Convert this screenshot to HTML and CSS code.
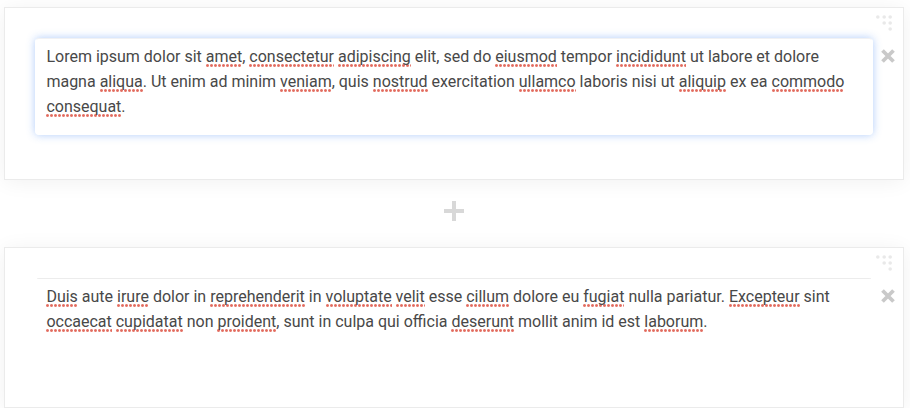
FILE: index.html
```html
<!DOCTYPE html>
<html lang="en">
<head>
<meta charset="utf-8">
<title>Content blocks</title>
<link rel="stylesheet" href="styles.css">
</head>
<body>
<svg class="defs" aria-hidden="true">
  <symbol id="grip" viewBox="0 0 16 16"><circle cx="1.8" cy="2" r="1.8"/><circle cx="8.2" cy="2" r="1.8"/><circle cx="14.2" cy="2" r="1.8"/><circle cx="8.2" cy="8" r="1.8"/><circle cx="14.2" cy="8" r="1.8"/><circle cx="14.2" cy="14" r="1.8"/></symbol>
  <symbol id="close" viewBox="0 0 14 14"><path d="M1.5 1.5l11 11M12.5 1.5l-11 11"/></symbol>
</svg>
<main class="blocks">
  <section class="card card-first">
    <div class="field focused">Lorem ipsum dolor sit <span class="sp">amet</span>, <span class="sp">consectetur</span> <span class="sp">adipiscing</span> elit, sed do <span class="sp">eiusmod</span> tempor <span class="sp">incididunt</span> ut labore et dolore<br>magna <span class="sp">aliqua</span>. Ut enim ad minim <span class="sp">veniam</span>, quis <span class="sp">nostrud</span> exercitation <span class="sp">ullamco</span> laboris nisi ut <span class="sp">aliquip</span> ex ea <span class="sp">commodo</span><br><span class="sp">consequat</span>.</div>
    <div class="tools"><svg class="grip"><use href="#grip"/></svg><svg class="close"><use href="#close"/></svg></div>
  </section>
  <div class="add"><svg class="plus" viewBox="0 0 20 20"><path d="M8 0h4v8h8v4h-8v8H8v-8H0V8h8z"/></svg></div>
  <section class="card card-second">
    <div class="field"><span class="sp">Duis</span> aute <span class="sp">irure</span> dolor in <span class="sp">reprehenderit</span> in <span class="sp">voluptate</span> <span class="sp">velit</span> esse <span class="sp">cillum</span> dolore eu <span class="sp">fugiat</span> nulla pariatur. <span class="sp">Excepteur</span> sint<br><span class="sp">occaecat</span> <span class="sp">cupidatat</span> non <span class="sp">proident</span>, sunt in culpa qui officia <span class="sp">deserunt</span> mollit anim id est <span class="sp">laborum</span>.</div>
    <div class="tools"><svg class="grip"><use href="#grip"/></svg><svg class="close"><use href="#close"/></svg></div>
  </section>
</main>
</body>
</html>
```
FILE: styles.css
```css
* { box-sizing: border-box; }
body {
  margin: 0;
  background: #fff;
  color: #484848;
  font: 16px/25px Roboto, sans-serif;
  overflow: hidden;
}
.defs { display: none; }
.blocks { padding: 7px 6px 0 4px; }
.card {
  display: flex;
  align-items: flex-start;
  padding: 0 0 0 30px;
  background: #fff;
  border: 1px solid #ebebeb;
  box-shadow: 0 2px 20px rgba(0, 0, 0, .06);
}
.card-first { height: 173px; }
.card-second { height: 161px; }
.field {
  width: 838px;
  height: 97px;
  margin-top: 30px;
  padding: 5px 10.4px;
  border: 1px solid transparent;
  border-radius: 4px;
  white-space: nowrap;
  background: linear-gradient(#ececec, #ececec) 2px 0 / 834px 1px no-repeat border-box;
}
.focused {
  background: #fff;
  border-color: #fff;
  border-top-color: #f0f1f4;
  box-shadow: 0 0 8px rgba(66, 133, 244, .42);
}
.sp {
  padding-bottom: 1px;
  background: radial-gradient(circle at 1.5px 1.5px, #e26b5e .9px, rgba(226, 107, 94, 0) 1.9px) 0 100% / 4px 3px repeat-x;
}
.tools {
  display: flex;
  flex-direction: column;
  padding: 7px 0 0 3px;
}
.grip { width: 16px; height: 16px; fill: #e9e9e9; }
.close {
  width: 14px;
  height: 14px;
  margin: 18px 0 0 5px;
  fill: none;
  stroke: #c9c9c9;
  stroke-width: 3.8;
}
.add {
  display: flex;
  justify-content: center;
  align-items: center;
  height: 67px;
}
.plus { display: block; width: 20px; height: 20px; fill: #d8d8d8; margin-top: -5px; }
```
